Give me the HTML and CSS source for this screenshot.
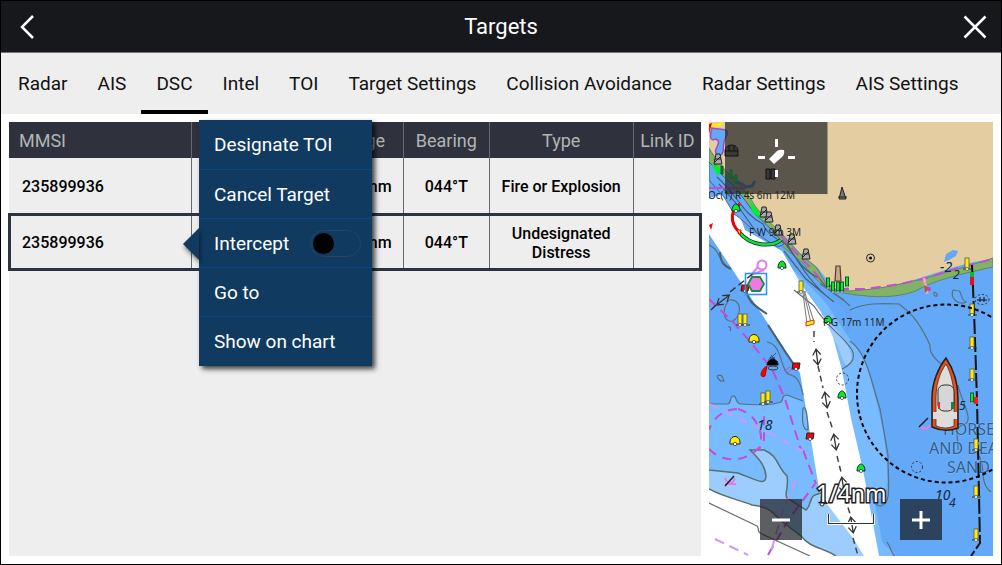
FILE: index.html
```html
<!DOCTYPE html>
<html lang="en">
<head>
<meta charset="utf-8">
<meta name="viewport" content="width=device-width, initial-scale=1">
<title>Targets</title>
<link rel="stylesheet" href="styles.css">
</head>
<body>
<div class="app">
  <header class="titlebar">
    <button class="icon-btn" type="button" aria-label="Back">
      <svg width="24" height="24" viewBox="0 0 24 24"><path d="M18 1 7 12 18 23" /></svg>
    </button>
    <h1 class="title">Targets</h1>
    <button class="icon-btn" type="button" aria-label="Close">
      <svg width="24" height="24" viewBox="0 0 24 24"><path d="M1.500 1.500 22.500 22.500M22.500 1.500 1.500 22.500" /></svg>
    </button>
  </header>
  <nav class="tabs">
    <button class="tab" type="button">Radar</button>
    <button class="tab" type="button">AIS</button>
    <button class="tab active" type="button">DSC</button>
    <button class="tab" type="button">Intel</button>
    <button class="tab" type="button">TOI</button>
    <button class="tab" type="button">Target Settings</button>
    <button class="tab" type="button">Collision Avoidance</button>
    <button class="tab" type="button">Radar Settings</button>
    <button class="tab" type="button">AIS Settings</button>
  </nav>
  <main class="content">
    <section class="list">
      <table class="targets">
        <colgroup><col class="c-mmsi"><col class="c-name"><col class="c-range"><col class="c-bearing"><col class="c-type"><col class="c-link"></colgroup>
        <thead>
          <tr><th class="left">MMSI</th><th></th><th>Range</th><th>Bearing</th><th>Type</th><th>Link ID</th></tr>
        </thead>
        <tbody>
          <tr><td class="left">235899936</td><td></td><td>0.550nm</td><td>044°T</td><td>Fire or Explosion</td><td></td></tr>
          <tr class="selected"><td class="left">235899936</td><td></td><td>0.550nm</td><td>044°T</td><td>Undesignated Distress</td><td></td></tr>
        </tbody>
      </table>
      <div class="menu">
        <button class="item" type="button">Designate TOI</button>
        <button class="item" type="button">Cancel Target</button>
        <label class="item">Intercept <input class="switch" type="checkbox"></label>
        <button class="item" type="button">Go to</button>
        <button class="item" type="button">Show on chart</button>
      </div>
    </section>
    <section class="chart" aria-label="Chart">
      <svg class="map" viewBox="709 122 284 434" preserveAspectRatio="xMidYMid slice">
        <defs>
          <g id="yel"><path d="M-4 6H5" stroke="#333"/><rect x="-2" y="-5" width="4" height="10" fill="#fe0" stroke="#555" stroke-width=".8"/><circle cy="6" r="1.500" fill="#fff" stroke="#444" stroke-width=".6"/></g>
          <g id="gbell"><path d="M-4 3C-4-1-2-4 0-4S4-1 4 3Z" fill="#0e2" stroke="#123"/><circle cy="3" r="1.600" fill="#fff" stroke="#333" stroke-width=".7"/></g>
          <g id="ybell"><path d="M-5 4C-6-6 6-6 5 4Z" fill="#fe0" stroke="#222"/><circle cy="4" r="1.700" fill="#fff" stroke="#333" stroke-width=".8"/></g>
          <g id="rcan"><path d="M-4 3-3-3H4L3 3Z" fill="#f00" stroke="#222"/><circle cy="3" r="1.600" fill="#fff" stroke="#333" stroke-width=".7"/></g>
          <g id="tower" fill="#aaa" stroke="#222"><path d="M-2-5H2L4 5H-4ZM-3 0H3M-3 3 2-2"/></g>
          <g id="gpost"><rect x="-1.500" y="-5" width="3" height="9" fill="#0e2" stroke="#153"/><circle cy="5" r="1" fill="#fff" stroke="#555" stroke-width=".5"/></g>
          <g id="flow" fill="none" stroke="#333" stroke-width="1.300"><path d="M-4-2 0-8 4-2M-4 2 0 8 4 2M0-7V7"/></g>
        </defs>
        <rect x="709" y="122" width="284" height="434" fill="#64a9f7"/>
        <!-- shallows -->
        <path d="M709 404H728C732 403 729 397 733 396S735 404 741 404C754 405 773 405 781 402C784 400 781 395 787 395L803 401 822 495 830 556H709Z" fill="#79bbff"/>
        <path d="M709 470 738 473C757 480 765 486 766 477C766 465 756 456 750 450H764C779 456 776 466 787 476C789 489 784 493 787 498L806 510C811 506 810 496 815 495L821 493 858 539 864 556H709Z" fill="#9dcdff"/>
        <path d="M709 489C726 498 740 500 752 505 768 507 772 511 780 520L801 536C810 548 824 548 836 556H709Z" fill="#fff"/>
        <path d="M781 258 828 322 842 370 878 556H896C893 550 885 548 882 541L874 499C885 503 888 490 887 470 886 430 875 398 868 368 863 353 854 345 847 335L826 303 800 276Z" fill="#79bbff"/>
        <path d="M847 335C856 320 852 305 837 293L826 292 845 310Z" fill="#5fa5f3"/>
        <path d="M820 312C838 330 855 350 851 362 847 374 842 358 838 347Z" fill="#9dcdff"/>
        <!-- dredged channel -->
        <path d="M709 198 731 192 745 230 782 251 801 284 821 312 833 337 842 370 851 418 863 470 879 556H864L853 538 820 495 800 373 784 348 709 234Z" fill="#fff"/>
        <!-- river and land -->
        <path d="M709 122H993V259C960 262 931 277 890 286 863 291 846 292 833 288L818 268 799 252 783 234 758 215 743 192 724 173 714 155 709 150Z" fill="#e3cda1"/>
        <path d="M709 148C716 160 724 171 735 178L751 199C756 209 765 218 778 230L801 255 816 267 825 282C834 292 845 292 862 290 890 288 931 278 993 258V267C966 273 933 280 916 291 895 298 877 298 850 294 831 292 817 284 804 264L775 240 749 221 729 190 709 165Z" fill="#82b265" stroke="#597b58" stroke-width=".8"/>
        <path d="M709 162 722 175 732 184 744 199 755 214 772 230 784 244 778 247C759 238 744 220 734 214L724 197 709 180Z" fill="#64a9f7" stroke="#31557b" stroke-width=".8"/>
        <path d="M782 240C792 250 800 270 819 278 826 288 833 294 844 300M786 242C799 264 814 288 834 302M784 251 806 279 829 298M719 184 735 202 757 233M717 177C739 197 742 213 763 224 766 232 775 239 783 242" fill="none" stroke="#465f70" stroke-width="1.200"/>
        <path d="M712 128C720 130 729 127 727 135 720 145 727 155 718 156 710 150 724 143 716 139 709 142 710 135 712 128Z" fill="#64a9f7" stroke="#a04cc6" stroke-width="1.500"/>
        <path d="M709 124C714 127 719 126 722 122" fill="none" stroke="#fe0" stroke-width="3"/><path d="M709 124V134L712 123Z" fill="#f00"/>
        <path d="M712 166 718 176 721 170 715 162ZM750 202 752 212 761 219 758 210Z" fill="#0e3"/><path d="M713 158 719 162 715 167Z" fill="#a77335"/>
        <path d="M737 182C748 186 744 188 752 186L755 181" fill="none" stroke="#4489cf" stroke-width="3"/>
        <path d="M944 262 946 254 953 250 958 251 956 256 949 260Z" fill="#64a9f7"/>
        <!-- depth contours -->
        <g fill="none" stroke="#56707d" stroke-width="1.200">
          <path d="M709 245C721 250 718 263 731 269M729 300C741 298 743 314 733 321 725 323 720 312 729 300M728 327Q732 326 730 331M709 404H728C732 403 729 397 733 396S735 404 741 404C754 405 773 405 781 402C784 400 781 395 787 395L803 401M717 376Q722 373 724 381 719 382 717 376M767 342C782 344 780 368 788 374 797 376 800 381 803 395M803 408C807 405 808 424 808 430 802 430 802 419 803 408"/>
          <path d="M850 310C865 303 880 303 899 304 907 310 917 317 930 345 929 354 936 360 948 370M850 341C867 353 871 381 880 409L888 455C888 487 892 502 881 506 875 506 872 500 872 492M958 385C961 400 974 420 965 424 952 427 959 440 958 450M974 450C989 463 977 482 991 492M887 542C892 549 891 554 895 556M820 284C833 292 845 301 850 306"/>
          <path d="M953 290C966 290 957 297 966 302 958 306 950 298 953 290M934 292Q938 293 937 296 933 297 934 292M794 290 814 306C829 330 841 333 852 350 857 360 848 366 842 369"/>
          <path d="M709 503 757 526C760 529 756 532 762 534L810 556" stroke="#65716c"/>
          <path d="M709 470 738 473C757 480 765 486 766 477C766 465 756 456 750 450H764C779 456 776 466 787 476C789 489 784 493 787 498L806 510C811 506 810 496 815 495L821 493M709 489C726 498 740 500 752 505 768 507 772 511 780 520L801 536C810 548 824 548 836 556" stroke="#5a7168" stroke-width="1.500"/>
        </g>
        <path d="M720 252C720 262 724 266 731 269M746 286C746 302 757 307 767 314M768 325 786 353 797 369" fill="none" stroke="#48616b" stroke-width="2"/>
        <!-- magenta limits -->
        <g fill="none" stroke="#c34ed1" stroke-width="2" stroke-dasharray="10 6">
          <path d="M781 236 798 255 811 268 822 281 836 289 865 289 900 284 923 279 958 268 993 259"/>
          <path d="M709 299 733 322 752 344 772 369 785 399 801 450" />
          <path d="M738 409A31 31 0 0 1 759 450M737 409A30 30 0 0 0 709 430M709 449A34 34 0 0 0 764 440V409" stroke-dasharray="9 7"/>
          <path d="M768 555 789 519 815 484M803 450 816 484"/>
          <path d="M709 404 734 416 777 437 803 451M796 480 781 517 770 555M715 539 748 555" stroke="#c99bf8"/>
          <path d="M709 188H746" stroke-dasharray="none"/>
        </g>
        <g fill="none" stroke="#e47be8" stroke-width="2"><circle cx="762" cy="265" r="4.500"/><path d="M758 267 751 275 764 270M725 478C728 486 736 482 734 478M725 484H736M921 425C922 431 930 429 929 425"/></g>
        <path d="M725 486 734 476M919 427 928 418" stroke="#222" stroke-width="1.500"/>
        <!-- tide and fairway lines -->
        <path d="M814 331V342M818 366 823 388M827 412 833 430M837 456 841 472M845 498 850 514M853 538 858 556" fill="none" stroke="#444" stroke-width="1.500" stroke-dasharray="6 4"/>
        <use href="#flow" transform="translate(817 357) rotate(-7)"/><use href="#flow" transform="translate(826 400) rotate(-9)"/><use href="#flow" transform="translate(835 442) rotate(-9)"/><use href="#flow" transform="translate(843 485) rotate(-9)"/><use href="#flow" transform="translate(852 525) rotate(-9)"/>
        <path d="M711 310 717 304M730 292 755 272" fill="none" stroke="#333" stroke-width="1.500" stroke-dasharray="7 4"/><use href="#flow" transform="translate(723 300) rotate(52)"/>
        <!-- sector light -->
        <path d="M740 204C731 209 729 222 739 232" fill="none" stroke="#e8000c" stroke-width="3"/><path d="M739 232C751 247 772 247 781 240" fill="none" stroke="#123" stroke-width="4"/><path d="M739 232C751 247 772 247 781 240" fill="none" stroke="#0de82b" stroke-width="2.500"/><path d="M737 230 741 230 740 235Z" fill="#fe0" stroke="#f00"/><path d="M709 225 713 223 711 230Z" fill="#f00"/>
        <use href="#gbell" x="736" y="208"/><use href="#gbell" x="782" y="265"/><use href="#gbell" x="828" y="320"/><use href="#gbell" x="842" y="395"/><use href="#gbell" x="861" y="468"/>
        <use href="#ybell" x="754" y="338"/><use href="#ybell" x="735" y="440"/><use href="#rcan" x="796" y="366"/><use href="#rcan" x="810" y="436"/><use href="#rcan" x="745" y="288"/>
        <use href="#tower" x="764" y="212"/><use href="#tower" x="769" y="217"/><use href="#tower" x="778" y="230"/><use href="#tower" x="792" y="239"/><use href="#tower" x="806" y="254"/>
        <path d="M836 266H840L841 281H835Z" fill="#c4a98a" stroke="#5a3928" stroke-width="1.200"/>
        <use href="#gpost" x="828" y="283"/><use href="#gpost" x="833" y="287"/><use href="#gpost" x="838" y="287"/><use href="#gpost" x="842" y="287"/><use href="#gpost" x="847" y="282"/>
        <use href="#yel" x="801" y="286"/><use href="#yel" x="740" y="319"/><use href="#yel" x="745" y="319"/><use href="#yel" x="763" y="398"/><use href="#yel" x="768" y="396"/>
        <path d="M803 293 807 324M804 293 811 323M805 293 814 322" stroke="#777" fill="none"/><path d="M806 322 814 320 814 324 806 326Z" fill="#fe0" stroke="#c33"/>
        <path d="M839 199 842 187 846 199ZM838 197H847" fill="#777" stroke="#222"/><circle cx="870.500" cy="258" r="4" fill="none" stroke="#222"/><circle cx="870.500" cy="258" r="1.500"/>
        <rect x="745.500" y="273.500" width="21" height="21" fill="none" stroke="#2997f3" stroke-width="1.600"/><path d="M752 277H760L764 284 760 291H752L748 284Z" fill="#ef79e0" stroke="#168d43" stroke-width="1.800"/>
        <path d="M767 366C760 370 759 379 765 376L767 366Z" fill="#f00" stroke="#b00"/><path d="M767 365C768 360 770 360 773 359 776 360 778 361 778 365ZM770 358H775" stroke="#111"/><ellipse cx="773" cy="368" rx="5" ry="2" fill="none" stroke="#333"/><path d="M784 371 790 367M786 374 792 369" stroke="#a65bb7"/><path d="M768 361 772 355M772 357 776 353" stroke="#456"/>
        <g fill="none" stroke="#333" stroke-dasharray="2 2"><circle cx="842.500" cy="379" r="6"/><circle cx="917" cy="467" r="5.500"/><ellipse cx="982" cy="299.500" rx="7" ry="5"/></g><path d="M977 300H987M980 297V302M984 297V302" stroke="#111"/>
        <path d="M924 278 927 294" stroke="#f3a0c5" stroke-width="3"/><path d="M924 285 930 288 925 293Z" fill="#9b6238"/><circle cx="929" cy="289" r="2" fill="#ca3bcc"/>
        <!-- chart labels -->
        <g class="small"><text x="708" y="199">Oc(1) R 4s 6m 12M</text><text x="749" y="236">F W 9m 3M</text><text x="823" y="326">F G 17m 11M</text></g>
        <g class="depth"><text x="757" y="430">18</text><text x="940" y="272">-2</text><text x="953" y="279" class="minor">2</text><text x="959" y="410" class="minor">5</text><text x="935" y="500">10</text><text x="949" y="507" class="minor">4</text></g>
        <g class="place"><text x="943" y="435">HORSE</text><text x="929" y="454">AND DEA</text><text x="947" y="473">SAND</text></g>
        <!-- right-hand buoy line -->
        <path d="M972 265 974 310 977 400 980 543 971 556" fill="none" stroke="#111" stroke-width="2" stroke-dasharray="15 3"/>
        <path d="M972 285V273" stroke="#e5101b" stroke-width="4"/><path d="M972 277V272" stroke="#0ab928" stroke-width="4"/>
        <use href="#yel" x="967" y="263"/><use href="#yel" x="972" y="309"/><use href="#yel" x="972" y="342"/><use href="#yel" x="972" y="374"/><use href="#yel" x="976" y="444"/><use href="#yel" x="976" y="491"/><use href="#yel" x="976" y="534"/><use href="#gpost" x="972" y="398"/><path d="M976 397V404" stroke="#e22" stroke-width="4"/>
        <circle cx="946" cy="393.500" r="89" fill="none" stroke="#000" stroke-width="2" stroke-dasharray="4 3"/>
        <!-- own vessel -->
        <path d="M946 358C938 368 932 383 932 398L932 427Q945 433 958 428V398C958 382 954 370 946 358Z" fill="#e95019" stroke="#222" stroke-width="1.500"/><path d="M946 364C939 374 936 386 936 398V426Q946 430 954 426V398C954 386 951 373 946 364Z" fill="#deddda" stroke="#222" stroke-width=".7"/><path d="M933 412H957V419H933Z" fill="#deddda"/><rect x="938" y="385" width="16" height="26" rx="6" fill="#d6d6d6" stroke="#333"/><rect x="938" y="402" width="2" height="7" fill="#dc2734"/><rect x="951" y="402" width="3" height="7" fill="#178345"/>
        <!-- north indicator -->
        <rect x="725" y="122" width="102.500" height="72" fill="#26282a" fill-opacity=".72"/>
        <g fill="#383a38" stroke="#111"><path d="M725 156V151C725 143 738 143 738 151V156ZM725 151H738M729 151V146M734 151V146M766 169H770V179H766ZM771 169H775V179H771Z"/><use href="#tower" x="718" y="159"/></g>
        <path d="M758 157.500H765M788 157.500H795M776.500 139V147M776.500 170V177" stroke="#fff" stroke-width="3"/><path d="M769 159 777 151Q780 149 784 150 785 154 782 157L774 164Z" fill="#fff"/>
        <g fill="#0b832a" stroke="#153"><path d="M721 166H723V174H721ZM730 170H732V178H730ZM735 175H737V183H735Z"/></g>
        <!-- scale -->
        <path d="M817 503C820 503 820 500 823 500S826 502 828 504Z"/><circle cx="822" cy="504" r="2" fill="#fff" stroke="#222"/>
        <path d="M828.500 514V523.500H873.500V514" fill="none" stroke="#fff" stroke-width="3"/><path d="M828.500 514V523.500H873.500V514" fill="none" stroke="#333" stroke-width="1.200"/>
        <text class="scale" x="816" y="502">1/4nm</text>
      </svg>
      <div class="zoom">
        <button type="button" aria-label="Zoom out"><svg width="20" height="20"><path d="M1 10H19"/></svg></button>
        <button class="plus" type="button" aria-label="Zoom in"><svg width="20" height="20"><path d="M1 10H19M10 1V19"/></svg></button>
      </div>
    </section>
  </main>
</div>
</body>
</html>
```
FILE: styles.css
```css
* { box-sizing: border-box; }
body { margin: 0; font-family: Roboto, "Liberation Sans", sans-serif; color: #111; }
button { font: inherit; color: inherit; border: 0; padding: 0; background: none; }
.app { min-height: 100vh; display: flex; flex-direction: column; border: 1px solid #000; background: #fff; }
.titlebar { display: flex; align-items: center; justify-content: space-between; height: 52px; padding: 0 14px; background: #17181c; border-bottom: 1px solid #77757c; color: #fff; }
.title { margin: 0; font-size: 22px; font-weight: 400; }
.icon-btn { display: flex; }
.icon-btn path { fill: none; stroke: #fff; stroke-width: 2.500; }
.tabs { display: flex; height: 61px; padding-left: 2px; background: #eee; }
.tab { padding: 4px 15px 0; border-bottom: 4px solid transparent; font-size: 19px; white-space: nowrap; }
.tab.active { border-color: #000; }
.content { flex: 1; display: grid; grid-template-columns: 692fr 284fr; gap: 8px; padding: 8px; }
.list { position: relative; background: #eee; }
.targets { width: 100%; table-layout: fixed; border-collapse: collapse; }
.c-mmsi { width: 26.400%; }
.c-name { width: 18%; }
.c-range { width: 12.600%; }
.c-bearing { width: 12.400%; }
.c-type { width: 20.800%; }
.targets th { height: 36px; padding: 0; background: #2f323d; color: #b4b4b4; font-size: 18px; font-weight: 400; }
.targets td { height: 56px; padding: 1px 8px 0; font-size: 16px; line-height: 19px; font-weight: 500; color: #000; text-align: center; }
.targets td:nth-child(3) { padding: 1px 0 0; }
.targets th + th, .targets td + td { border-left: 1px solid #666970; }
.targets .left { text-align: left; padding-left: 13px; }
.targets th.left { padding-left: 10px; }
.selected { outline: 3px solid #2d3440; outline-offset: -2px; }
.menu { position: absolute; left: 190px; top: -2px; width: 173px; background: #103a60; box-shadow: 3px 3px 5px #000b; color: #fff; }
.menu::before { content: ""; position: absolute; right: 100%; top: 108px; border: 16px solid transparent; border-left: 0; border-right-color: #103a60; filter: drop-shadow(1px 3px 2px #0008); }
.item { display: flex; align-items: center; justify-content: space-between; width: 100%; height: 49px; padding: 0 11px 0 15px; font-size: 19px; }
.item + .item { border-top: 1px solid #07488b; }
.item:last-child { height: 50px; }
.switch { appearance: none; width: 51px; height: 27px; margin: 0; padding: 2px; border: 1px solid #28445f; border-radius: 14px; }
.switch::before { content: ""; display: block; width: 21px; height: 21px; border-radius: 50%; background: #000; }
.chart { position: relative; overflow: hidden; }
.map { position: absolute; width: 100%; height: 100%; font-family: "Noto Sans", sans-serif; }
.small { font-size: 10px; fill: #222; }
.depth { font-size: 14px; font-style: italic; fill: #12283d; }
.minor { font-size: 12px; }
.place { font-size: 16px; fill: #315d8d; stroke: #82b9f5; stroke-width: 1px; paint-order: stroke; }
.scale { font-size: 23px; fill: #fff; stroke: #222; stroke-width: 3px; paint-order: stroke; }
.zoom { position: absolute; left: 18%; right: 18%; bottom: 16px; display: flex; justify-content: space-between; }
.zoom button { display: grid; place-items: center; width: 42px; height: 41px; background: #1d2025b8; }
.zoom .plus { background: #2c435f; }
.zoom path { fill: none; stroke: #fff; stroke-width: 3; }
```
